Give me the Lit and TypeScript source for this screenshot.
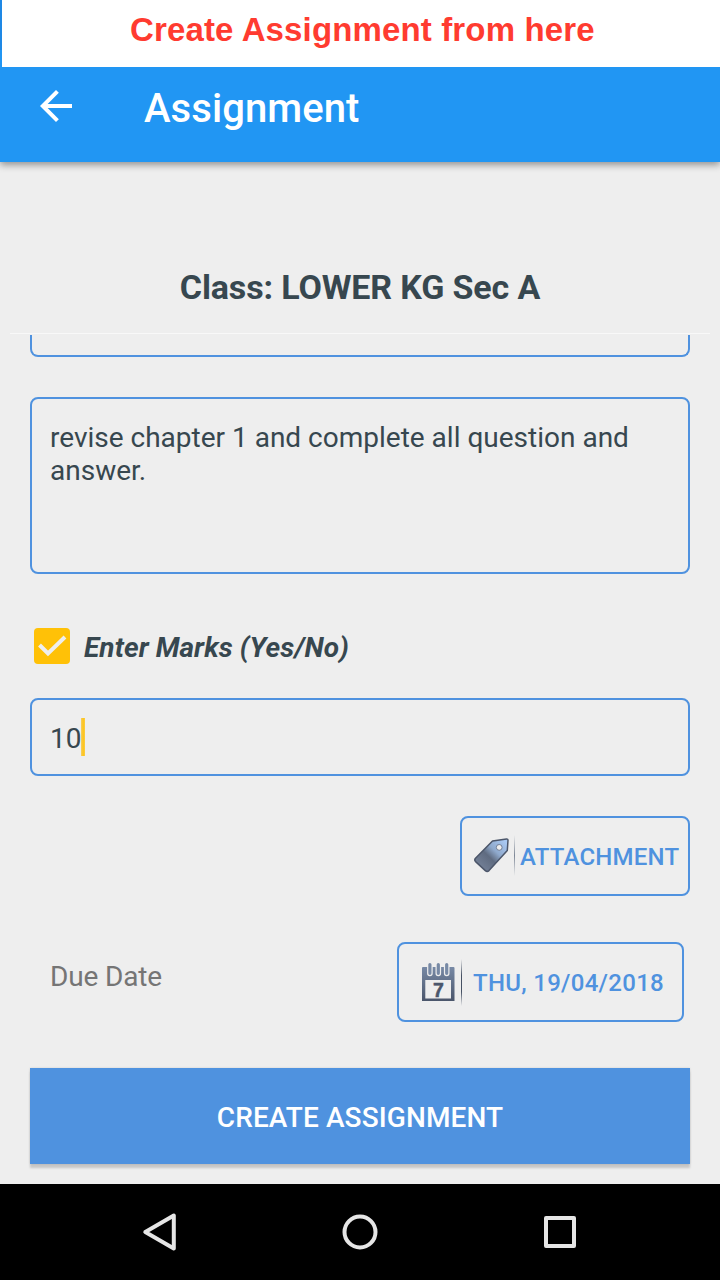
import { LitElement, html, css } from "lit";
import { customElement, state } from "lit/decorators.js";

@customElement("app-root")
export class AppRoot extends LitElement {
  @state() private description = "revise chapter 1 and complete all question and answer.";
  @state() private marks = "10";
  @state() private dueDate = "THU, 19/04/2018";

  static styles = css`
    :host {
      display: flex;
      flex-direction: column;
      width: 720px;
      height: 1280px;
      overflow: hidden;
      background: #eeeeee;
      color: #37474f;
      font-family: Roboto, sans-serif;
      font-size: 28px;
      line-height: 33px;
    }
    * { box-sizing: border-box; }
    svg { display: block; flex: none; }
    .banner {
      flex: none;
      height: 67px;
      padding-left: 2px;
      background: linear-gradient(#1e88e5 50px, #2196f3 50px);
      position: relative;
      z-index: 1;
    }
    .banner-text {
      height: 67px;
      background: #fff;
      color: #ff3b30;
      font: bold 33px/60px "Liberation Sans", sans-serif;
      letter-spacing: 0.14px;
      padding-left: 128px;
      white-space: nowrap;
    }
    .appbar {
      flex: none;
      height: 95px;
      display: flex;
      align-items: flex-start;
      padding: 15px 32px 0;
      background: #2196f3;
      color: #fff;
      box-shadow: 0 3px 7px rgba(0, 0, 0, 0.38);
    }
    .title {
      margin: 3px 0 0 64px;
      font-size: 40px;
      font-weight: 500;
      line-height: 47px;
      letter-spacing: 0.08px;
    }
    .class-name {
      flex: none;
      height: 172px;
      margin: 0 10px;
      padding-top: 105px;
      border-bottom: 1px solid #f8f8f8;
      text-align: center;
      font-size: 34px;
      font-weight: 700;
      line-height: 40px;
      letter-spacing: -0.14px;
      white-space: nowrap;
    }
    .form {
      flex: 1;
      display: flex;
      flex-direction: column;
      padding: 1px 30px 0;
      min-height: 0;
    }
    .box {
      flex: none;
      border: 2px solid #4f92df;
      border-radius: 8px;
    }
    .clipped { height: 22px; border-top: 0; border-radius: 0 0 8px 8px; }
    .desc { height: 177px; margin-top: 40px; padding: 22px 18px; }
    .check {
      display: flex;
      align-items: center;
      margin: 54px 0 0 4px;
      gap: 14px;
      height: 36px;
      font-weight: 700;
      font-style: italic;
      letter-spacing: 0.08px;
      white-space: nowrap;
    }
    .check span { padding-top: 2px; }
    .marks {
      display: flex;
      align-items: center;
      height: 78px;
      margin-top: 34px;
      padding-left: 18px;
    }
    .value { padding-top: 2px; }
    .caret { width: 4px; height: 38px; background: linear-gradient(90deg, #f6cf62, #fdc41c 55%, #fbcd45); }
    .action {
      display: flex;
      align-items: center;
      color: #4f92df;
      font-size: 24px;
      font-weight: 500;
      white-space: nowrap;
      height: 80px;
    }
    .attach {
      align-self: flex-end;
      width: 230px;
      margin-top: 40px;
      padding-left: 10px;
    }
    .due {
      display: flex;
      justify-content: space-between;
      padding: 0 6px 0 20px;
      margin-top: 46px;
      color: #757575;
    }
    .due-label { margin-top: 18px; letter-spacing: -0.17px; }
    .date { width: 287px; padding-left: 20px; }
    .submit {
      flex: none;
      height: 96px;
      margin-top: 46px;
      background: #4f92df;
      color: #fff;
      text-align: center;
      font-weight: 500;
      line-height: 99px;
      letter-spacing: 0.1px;
      box-shadow: 0 4px 2px rgba(0, 0, 0, 0.16), 0 0 2px rgba(0, 0, 0, 0.12);
    }
    .nav {
      flex: none;
      height: 96px;
      background: #000;
      display: flex;
      align-items: center;
      justify-content: center;
      gap: 152px;
    }
    .attach-text { margin-left: 3px; padding-top: 2px; letter-spacing: 0.23px; }
    .date-text { margin-left: 10px; padding-top: 2px; letter-spacing: 0.3px; }
  `;

  render() {
    return html`
      <div class="banner"><div class="banner-text">Create Assignment from here</div></div>
      <header class="appbar">
        <svg width="48" height="48" viewBox="0 0 24 24">
          <path fill="#fff" d="M20 11H7.83l5.59-5.59L12 4l-8 8 8 8 1.41-1.41L7.83 13H20v-2z" />
        </svg>
        <div class="title">Assignment</div>
      </header>
      <div class="class-name">Class: LOWER KG Sec A</div>
      <main class="form">
        <div class="box clipped"></div>
        <div class="box desc">${this.description}</div>
        <div class="check">
          <svg width="36" height="36" viewBox="0 0 36 36">
            <rect width="36" height="36" rx="4" fill="#ffc107" />
            <path d="M5.500 17L14 25.500 31 9" fill="none" stroke="#eee" stroke-width="4" />
          </svg>
          <span>Enter Marks (Yes/No)</span>
        </div>
        <div class="box marks"><span class="value">${this.marks}</span><span class="caret"></span></div>
        <div class="box action attach">
          <svg width="45" height="44" viewBox="472 834 45 44">
            <defs>
              <linearGradient id="tag" x1="1" y1="0" x2="0.1" y2="0.9">
                <stop offset="0.1" stop-color="#a9c8f2" />
                <stop offset="0.42" stop-color="#8fa9cc" />
                <stop offset="0.62" stop-color="#5f6b80" />
                <stop offset="1" stop-color="#76839a" />
              </linearGradient>
              <linearGradient id="rule" x2="0" y2="1">
                <stop offset="0" stop-color="#7d8796" stop-opacity="0" />
                <stop offset="0.5" stop-color="#7d8796" />
                <stop offset="1" stop-color="#7d8796" stop-opacity="0" />
              </linearGradient>
            </defs>
            <path d="M492.500 841L506.500 838.900Q508 838.800 508 840.300L507.300 850.500 489 870.600Q487.200 872.300 485.300 870.600L475.600 861.600Q474 860 475.500 858.300Z"
              fill="url(#tag)" stroke="#4c566a" stroke-width="1.500" stroke-linejoin="round" />
            <circle cx="499.200" cy="847.400" r="2.900" fill="#eee" stroke="#66748c" stroke-width="0.900" />
            <rect x="514" y="835" width="1" height="41" fill="url(#rule)" />
          </svg>
          <span class="attach-text">ATTACHMENT</span>
        </div>
        <div class="due">
          <span class="due-label">Due Date</span>
          <div class="box action date">
            <svg width="44" height="48" viewBox="419 958 44 48">
              <defs>
                <linearGradient id="cal" x2="0" y2="1">
                  <stop offset="0" stop-color="#7789a5" />
                  <stop offset="1" stop-color="#4b566b" />
                </linearGradient>
                <linearGradient id="line" x2="0" y2="1">
                  <stop offset="0" stop-color="#465164" stop-opacity="0" />
                  <stop offset="0.35" stop-color="#465164" />
                  <stop offset="0.7" stop-color="#465164" />
                  <stop offset="1" stop-color="#465164" stop-opacity="0" />
                </linearGradient>
              </defs>
              <path fill="url(#cal)" fill-rule="evenodd" d="M423 967H453.500Q454.500 967 454.500 968V1001H422V968Q422 967 423 967ZM425.300 980V998.600H451V980Z" />
              <path d="M429.900 965V973.500M438.300 965V973.500M446.700 965V973.500" stroke="#eee" stroke-width="5.600" stroke-linecap="round" />
              <path d="M429.900 964.500V973.300M438.300 964.500V973.300M446.700 964.500V973.300" stroke="#7789a5" stroke-width="3.200" stroke-linecap="round" />
              <text x="438.500" y="997.300" text-anchor="middle" fill="#4b566b" stroke="#4b566b" stroke-width="0.500" font-family="Liberation Sans, sans-serif" font-size="19.500" font-weight="700">7</text>
              <rect x="461" y="959" width="1" height="47" fill="url(#line)" />
            </svg>
            <span class="date-text">${this.dueDate}</span>
          </div>
        </div>
        <div class="submit">CREATE ASSIGNMENT</div>
      </main>
      <nav class="nav">
        <svg width="48" height="48" viewBox="0 0 48 48" fill="none" stroke="#e6e6e6" stroke-width="4" stroke-linejoin="round">
          <path d="M9.500 24L38 7.500V40.500Z" transform="translate(-0.200 0)" />
        </svg>
        <svg width="48" height="48" viewBox="0 0 48 48" fill="none" stroke="#e6e6e6" stroke-width="4">
          <circle cx="24" cy="24" r="15.500" />
        </svg>
        <svg width="48" height="48" viewBox="0 0 48 48" fill="none" stroke="#e6e6e6" stroke-width="4" stroke-linejoin="round">
          <rect x="10" y="10" width="28" height="28" />
        </svg>
      </nav>
    `;
  }
}
